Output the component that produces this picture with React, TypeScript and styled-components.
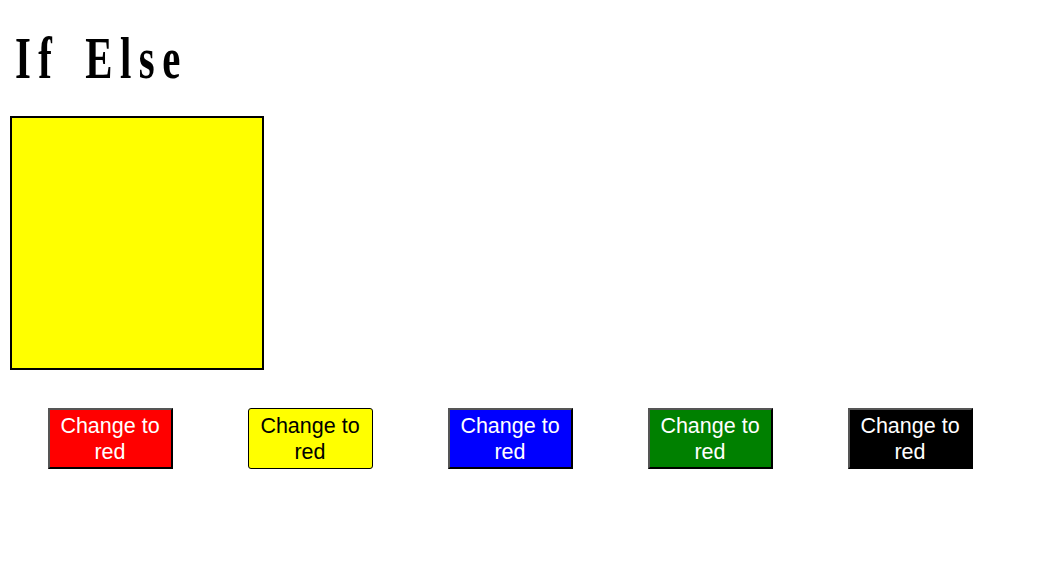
import React from "react"
import styled, { createGlobalStyle } from "styled-components"

const GlobalStyle = createGlobalStyle`
  body {
    margin: 0;
    background: #ffffff;
    font-family: "Liberation Sans", Arial, sans-serif;
  }
`

const buttons = [
  { bg: "#ff0000", fg: "#ffffff", active: false },
  { bg: "#ffff00", fg: "#000000", active: true },
  { bg: "#0000ff", fg: "#ffffff", active: false },
  { bg: "#008000", fg: "#ffffff", active: false },
  { bg: "#000000", fg: "#ffffff", active: false },
]

export default function App() {
  return (
    <StyledPage>
      <GlobalStyle />
      <StyledTitle>
        <span>If Else</span>
      </StyledTitle>
      <StyledSquare />
      <StyledButtonRow>
        {buttons.map((b, i) => (
          <StyledCell key={i}>
            <StyledButton $bg={b.bg} $fg={b.fg} $active={b.active}>
              Change to red
            </StyledButton>
          </StyledCell>
        ))}
      </StyledButtonRow>
    </StyledPage>
  )
}

const StyledPage = styled.div`
  padding: 0 10px;
  display: flex;
  flex-direction: column;
`

const StyledTitle = styled.h1`
  margin: 28px 0 0 5px;
  height: 88px;
  font-family: "Liberation Serif", "Times New Roman", serif;
  font-weight: bold;
  font-size: 60px;
  line-height: 60px;
  color: #000;
  span {
    display: inline-block;
    letter-spacing: 11px;
    word-spacing: 12px;
    transform: scaleX(0.68);
    transform-origin: left center;
    white-space: pre;
  }
`

const StyledSquare = styled.div`
  width: 250px;
  height: 250px;
  background: #ffff00;
  border: 2px solid #000;
`

const StyledButtonRow = styled.div`
  display: flex;
  margin-top: 38px;
`

const StyledCell = styled.div`
  width: 200px;
  display: flex;
  justify-content: center;
`

const StyledButton = styled.button<{ $bg: string; $fg: string; $active: boolean }>`
  width: 125px;
  height: 61px;
  padding: 0 6px;
  background: ${(p) => p.$bg};
  color: ${(p) => p.$fg};
  font-family: "Liberation Sans", Arial, sans-serif;
  font-size: 21.5px;
  line-height: 26px;
  border-width: ${(p) => (p.$active ? "1.5px" : "2px")};
  border-style: solid;
  border-radius: ${(p) => (p.$active ? "3px" : "0")};
  border-color: ${(p) => (p.$active ? "#000" : "#555 #000 #000 #555")};
  cursor: pointer;
`
